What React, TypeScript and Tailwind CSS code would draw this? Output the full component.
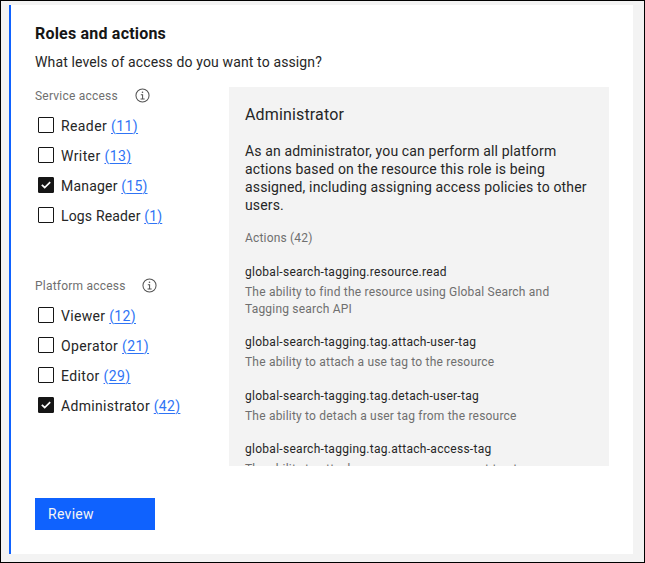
import React from "react";

type Role = { name: string; count: number; checked?: boolean; tracking: string };

const serviceRoles: Role[] = [
  { name: "Reader", count: 11, tracking: "tracking-[0.4px]" },
  { name: "Writer", count: 13, tracking: "tracking-[0.4px]" },
  { name: "Manager", count: 15, checked: true, tracking: "tracking-[0.2px]" },
  { name: "Logs Reader", count: 1, tracking: "tracking-[0.16px]" },
];

const platformRoles: Role[] = [
  { name: "Viewer", count: 12, tracking: "tracking-[0.33px]" },
  { name: "Operator", count: 21, tracking: "tracking-[0.38px]" },
  { name: "Editor", count: 29, tracking: "tracking-[0.4px]" },
  { name: "Administrator", count: 42, checked: true, tracking: "tracking-[0.31px]" },
];

const actions = [
  { id: "global-search-tagging.resource.read", lines: ["The ability to find the resource using Global Search and", "Tagging search API"] },
  { id: "global-search-tagging.tag.attach-user-tag", lines: ["The ability to attach a use tag to the resource"] },
  { id: "global-search-tagging.tag.detach-user-tag", lines: ["The ability to detach a user tag from the resource"] },
  { id: "global-search-tagging.tag.attach-access-tag", lines: ["The ability to attach an access management tag to"] },
];

function InfoIcon() {
  return (
    <svg width="15" height="15" viewBox="0 0 16 16" fill="none" stroke="#525252" strokeWidth="1.1">
      <circle cx="8" cy="8" r="7" />
      <path d="M6.2 7.1H8.1V11.6M5.9 11.7H10.3" />
      <circle cx="8" cy="4.6" r="0.85" fill="#525252" stroke="none" />
    </svg>
  );
}

function Checkbox({ checked }: { checked?: boolean }) {
  return (
    <span
      role="checkbox"
      aria-checked={!!checked}
      className={`flex size-4 shrink-0 items-center justify-center rounded-[1px] border border-[#161616] ${checked ? "bg-[#161616]" : "bg-white"}`}
    >
      {checked && (
        <svg width="10" height="8" viewBox="0 0 10 8" fill="none" stroke="white" strokeWidth="1.7">
          <path d="M0.8 3.9L3.7 6.5L9.2 1.2" />
        </svg>
      )}
    </span>
  );
}

function RoleGroup({ title, roles, gap }: { title: string; roles: Role[]; gap: string }) {
  return (
    <section>
      <div className={`flex h-4 items-center ${gap}`}>
        <h3 className="pt-px text-[12px] leading-4 tracking-[0.22px] text-[#6f6f6f]">{title}</h3>
        <InfoIcon />
      </div>
      <ul className="mt-[7px] pl-[3px]">
        {roles.map((r) => (
          <li key={r.name} className="flex h-[30px] items-center">
            <Checkbox checked={r.checked} />
            <span className={`mt-px ml-[7px] whitespace-nowrap text-[14px] leading-5 text-[#262626] ${r.tracking}`}>
              {r.name}{" "}
              <a className="text-[#2f74f5] underline decoration-1 underline-offset-2">({r.count})</a>
            </span>
          </li>
        ))}
      </ul>
    </section>
  );
}

export default function App() {
  return (
    <div className="h-[563px] w-[645px] overflow-hidden border border-black bg-[#f3f3f3] pt-1 pl-2 font-['Roboto','Noto_Sans',sans-serif] text-[#262626]">
      <main className="h-[549px] w-[624px] border-l-2 border-[#0f62fe] bg-white pt-[19px] pl-6">
        <h1 className="text-[16px] leading-5 font-bold tracking-[0.2px] text-[#161616]">Roles and actions</h1>
        <p className="mt-2 text-[14px] leading-5 tracking-[0.13px]">What levels of access do you want to assign?</p>
        <div className="mt-[15px] flex h-[379px]">
          <div className="w-[194px] shrink-0">
            <RoleGroup title="Service access" roles={serviceRoles} gap="gap-[17px]" />
            <div className="mt-[47px]">
              <RoleGroup title="Platform access" roles={platformRoles} gap="gap-[16px]" />
            </div>
          </div>
          <aside className="h-[379px] w-[380px] overflow-hidden bg-[#f3f3f3] px-4 pt-[18px]">
            <h2 className="text-[16px] leading-5 tracking-[0.15px]">Administrator</h2>
            <p className="mt-[17px] text-[14px] leading-[18px] whitespace-nowrap tracking-[0.15px]">
              As an administrator, you can perform all platform<br />
              actions based on the resource this role is being<br />
              assigned, including assigning access policies to other<br />
              users.
            </p>
            <p className="mt-4 text-[12px] leading-4 tracking-[0.18px] text-[#6f6f6f]">Actions (42)</p>
            <dl className="mt-[17px] flex flex-col gap-[15px] whitespace-nowrap">
              {actions.map((a) => (
                <div key={a.id}>
                  <dt className="text-[12px] leading-[18px] tracking-[0.28px]">{a.id}</dt>
                  <dd className="mt-[3px] text-[12px] leading-[17.2px] tracking-[0.2px] text-[#6f6f6f]">
                    {a.lines.map((l) => (
                      <span key={l} className="block">{l}</span>
                    ))}
                  </dd>
                </div>
              ))}
            </dl>
          </aside>
        </div>
        <button className="mt-8 flex h-8 w-[120px] items-center bg-[#0f62fe] pt-px pl-[13px] text-[14px] tracking-[0.3px] text-[#f4f4f4]">Review</button>
      </main>
    </div>
  );
}
